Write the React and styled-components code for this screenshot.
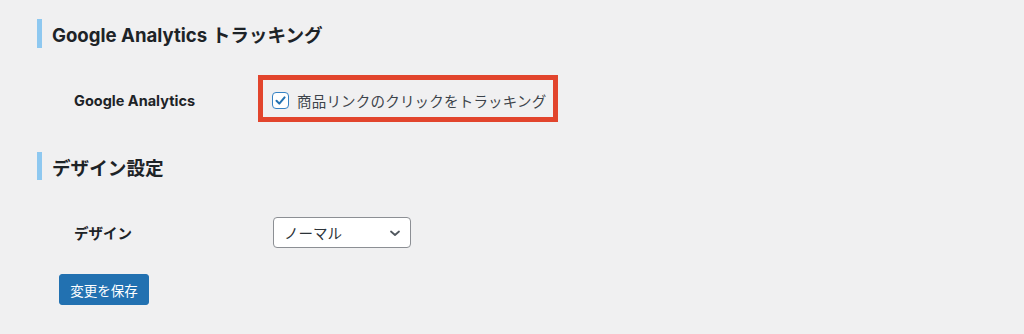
import React from 'react'
import styled, { createGlobalStyle } from 'styled-components'

const Global = createGlobalStyle`
  html, body {
    margin: 0;
    padding: 0;
    background: #f0f0f1;
  }
  body {
    font-family: Inter, "Noto Sans CJK JP", sans-serif;
    color: #1d2327;
  }
`

const Page = styled.div`
  width: 1024px;
  height: 334px;
  box-sizing: border-box;
  padding: 19px 0 0 37px;
  display: flex;
  flex-direction: column;
  align-items: flex-start;
`

const Heading = styled.h2`
  margin: ${(p) => p.$top || 0}px 0 0 0;
  height: ${(p) => p.$h || 29}px;
  display: flex;
  align-items: center;
  border-left: 5px solid #8ec8f0;
  padding-left: 10px;
  font-size: 18.6px;
  font-weight: 700;
  color: #1d2327;
`

const Row = styled.div`
  margin-top: ${(p) => p.$top}px;
  height: ${(p) => p.$h}px;
  padding-left: 37px;
  display: grid;
  grid-template-columns: 199px auto;
  align-items: center;
`

const Label = styled.div`
  padding-top: ${(p) => p.$nudge || 0}px;
  font-size: 14.5px;
  font-weight: 700;
  color: #1d2327;
`

const Highlight = styled.div`
  margin-left: -15px;
  width: 300px;
  height: 47px;
  box-sizing: border-box;
  border: 5px solid #e2452d;
  padding: 3px 0 0 9px;
  display: flex;
  align-items: center;
`

const CheckLabel = styled.label`
  display: flex;
  align-items: center;
  gap: 8px;
  font-size: 14.5px;
  color: #3c434a;
  letter-spacing: 0.2px;
`

const Box = styled.span`
  width: 17px;
  height: 17px;
  box-sizing: border-box;
  border: 1.5px solid #3582c4;
  border-radius: 4px;
  background: #fff;
  display: flex;
  align-items: center;
  justify-content: center;
`

const Select = styled.div`
  width: 138px;
  height: 31px;
  box-sizing: border-box;
  border: 1px solid #8c8f94;
  border-radius: 4px;
  background: #fff;
  padding: 0 8px 0 10px;
  display: flex;
  align-items: center;
  justify-content: space-between;
  font-size: 14.5px;
  color: #2c3338;
`

const Button = styled.button`
  margin: 26px 0 0 22px;
  width: 90px;
  height: 31px;
  border: 1px solid #2271b1;
  border-radius: 3px;
  background: #2271b1;
  color: #fff;
  font-family: Inter, "Noto Sans CJK JP", sans-serif;
  font-size: 13.5px;
  padding: 0;
`

const Check = () => (
  <svg width="13" height="13" viewBox="0 0 13 13">
    <path d="M2.5 6.8 L5.3 9.6 L10.6 3.4" fill="none" stroke="#2271b1" strokeWidth="2" strokeLinecap="round" strokeLinejoin="round" />
  </svg>
)

const Chevron = () => (
  <svg width="14" height="14" viewBox="0 0 14 14">
    <path d="M3 5.5 L7 9 L11 5.5" fill="none" stroke="#50575e" strokeWidth="1.8" strokeLinecap="round" strokeLinejoin="round" />
  </svg>
)

export default function App() {
  return (
    <>
      <Global />
      <Page>
        <Heading>Google Analytics トラッキング</Heading>
        <Row $top={27} $h={47}>
          <Label $nudge={4}>Google Analytics</Label>
          <Highlight>
            <CheckLabel>
              <Box><Check /></Box>
              商品リンクのクリックをトラッキング
            </CheckLabel>
          </Highlight>
        </Row>
        <Heading $top={30} $h={28}>デザイン設定</Heading>
        <Row $top={37} $h={31}>
          <Label>デザイン</Label>
          <Select>
            ノーマル
            <Chevron />
          </Select>
        </Row>
        <Button>変更を保存</Button>
      </Page>
    </>
  )
}
